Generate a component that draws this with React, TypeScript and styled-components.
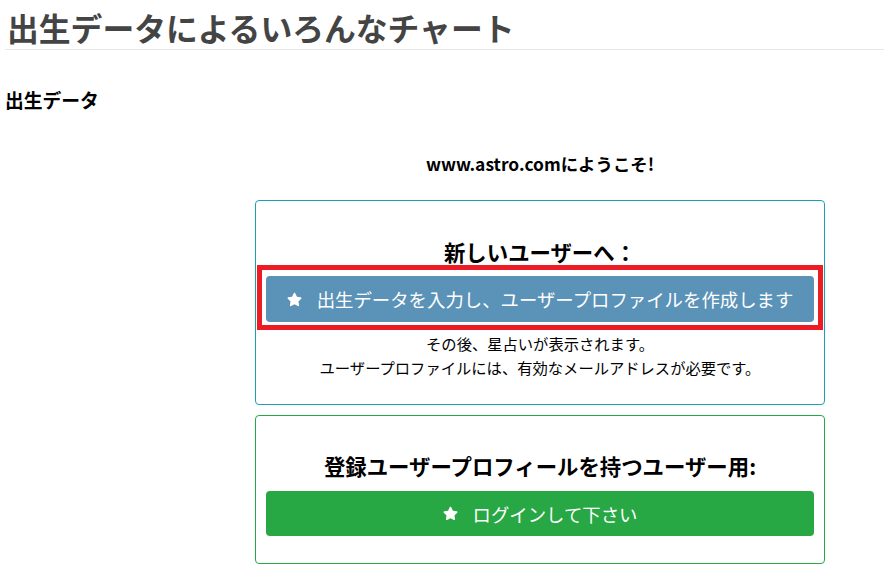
import React from 'react';
import styled, { createGlobalStyle } from 'styled-components';
import { FaStar } from 'react-icons/fa';

const TealColor = '#17a2b8';
const GreenColor = '#28a745';
const BlueButton = '#5b92b8';
const RedMark = '#ed1c24';

const GlobalStyle = createGlobalStyle`
  html, body {
    margin: 0;
    padding: 0;
    background: #fff;
  }
  body {
    font-family: 'Noto Sans CJK JP', 'Noto Sans', sans-serif;
    color: #000;
  }
`;

const Page = styled.div`
  padding: 0 5px;
`;

const Title = styled.h1`
  margin: 7px 0 0;
  padding: 0 0 2px 2px;
  font-size: 31.8px;
  line-height: 40px;
  font-weight: 700;
  color: #444;
  border-bottom: 1px solid #e8e8e8;
`;

const SectionTitle = styled.h3`
  margin: 38px 0 0;
  font-size: 18.8px;
  line-height: 24px;
  font-weight: 700;
`;

const Row = styled.div`
  display: grid;
  grid-template-columns: 250px 570px;
`;

const Main = styled.div`
  grid-column: 2;
  display: flex;
  flex-direction: column;
`;

const Welcome = styled.p`
  margin: 40px 0 0;
  text-align: center;
  font-size: 17.4px;
  line-height: 24px;
  font-weight: 700;
`;

const Card = styled.div<{ $accent: string }>`
  border: 1px solid ${(p) => p.$accent};
  border-radius: 4px;
  display: flex;
  flex-direction: column;
  align-items: stretch;
  box-sizing: border-box;
`;

const FirstCard = styled(Card)`
  margin-top: 24px;
  padding: 38px 1px 0;
  height: 205px;
`;

const SecondCard = styled(Card)`
  margin-top: 10px;
  padding: 37px 10px 0;
  height: 149px;
`;

const CardTitle = styled.h4`
  margin: 0;
  text-align: center;
  font-size: 21.4px;
  line-height: 26px;
  font-weight: 700;
`;

const Highlight = styled.div`
  border: 5px solid ${RedMark};
  padding: 6px 4px 3px;
`;

const ActionButton = styled.button<{ $bg: string }>`
  display: flex;
  align-items: center;
  justify-content: center;
  gap: 15px;
  width: 100%;
  height: 46px;
  border: none;
  border-radius: 4px;
  background: ${(p) => p.$bg};
  color: #fff;
  font-family: 'Noto Sans CJK JP', 'Noto Sans', sans-serif;
  font-size: 18.4px;
  cursor: pointer;

  svg {
    width: 15px;
    height: 15px;
  }
`;

const LoginButton = styled(ActionButton)`
  margin-top: 12px;
  height: 45px;
`;

const Note = styled.p`
  margin: 0;
  text-align: center;
  font-size: 15.3px;
  line-height: 24px;

  &:first-of-type {
    margin-top: 1px;
  }
`;

export default function App() {
  return (
    <Page>
      <GlobalStyle />
      <Title>出生データによるいろんなチャート</Title>
      <SectionTitle>出生データ</SectionTitle>
      <Row>
        <Main>
          <Welcome>www.astro.comにようこそ!</Welcome>
          <FirstCard $accent={TealColor}>
            <CardTitle>新しいユーザーへ：</CardTitle>
            <Highlight>
              <ActionButton $bg={BlueButton}>
                <FaStar />
                出生データを入力し、ユーザープロファイルを作成します
              </ActionButton>
            </Highlight>
            <Note>その後、星占いが表示されます。</Note>
            <Note>ユーザープロファイルには、有効なメールアドレスが必要です。</Note>
          </FirstCard>
          <SecondCard $accent={GreenColor}>
            <CardTitle>登録ユーザープロフィールを持つユーザー用:</CardTitle>
            <LoginButton $bg={GreenColor}>
              <FaStar />
              ログインして下さい
            </LoginButton>
          </SecondCard>
        </Main>
      </Row>
    </Page>
  );
}
